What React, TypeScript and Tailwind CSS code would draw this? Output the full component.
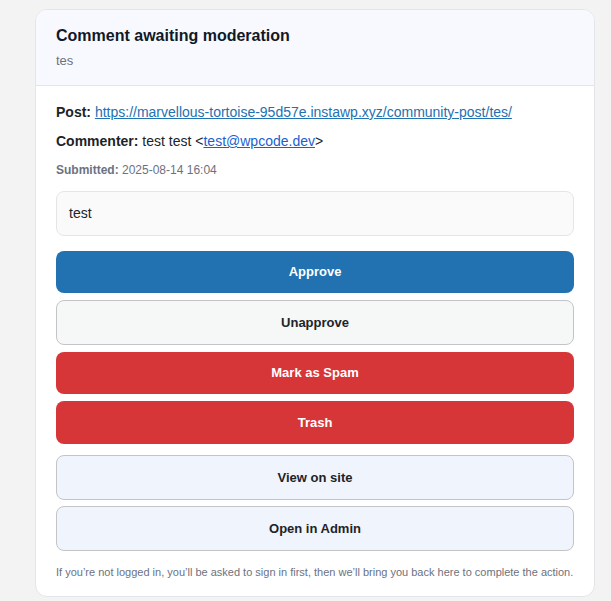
import React from "react";

export default function App() {
  return (
    <div className="min-h-[601px] w-full bg-[#f3f3f3] pt-[9px] pl-[35px] pr-[16px]" style={{ fontFamily: '"Liberation Sans", Arial, sans-serif' }}>
      <div className="w-[560px] overflow-hidden rounded-[12px] border border-[#e3e5e8] bg-white">
        <div className="border-b border-[#e3e5e8] bg-[#f8f9fe] px-[20px] pt-[15px] pb-[15px]">
          <div className="text-[16px] font-bold leading-[22px] text-[#111827]">Comment awaiting moderation</div>
          <div className="mt-[5px] text-[13px] leading-[18px] text-[#6b7280]">tes</div>
        </div>
        <div className="px-[20px] pt-[16px] pb-[17px]">
          <div className="text-[14px] leading-[20px] text-[#1d2327]">
            <span className="font-bold">Post:</span>{" "}
            <a className="text-[#2271b1] underline" href="#">https://marvellous-tortoise-95d57e.instawp.xyz/community-post/tes/</a>
          </div>
          <div className="mt-[9px] text-[14px] leading-[20px] text-[#1d2327]">
            <span className="font-bold">Commenter:</span> test test &lt;<a className="text-[#1a5fd0] underline" href="#">test@wpcode.dev</a>&gt;
          </div>
          <div className="mt-[11px] text-[12px] leading-[16px] text-[#6b7280]">
            <span className="font-bold">Submitted:</span> 2025-08-14 16:04
          </div>
          <div className="mt-[13px] flex h-[45px] items-center rounded-[8px] border border-[#e5e5e5] bg-[#fafafa] px-[12px] text-[14px] text-[#1d2327]">test</div>
          <div className="mt-[15px] flex flex-col">
            <button className="h-[42px] rounded-[8px] bg-[#2271b1] text-[13px] font-bold text-white">Approve</button>
            <button className="mt-[7px] h-[45px] rounded-[8px] border border-[#c3c4c7] bg-[#f6f7f7] text-[13px] font-bold text-[#1d2327]">Unapprove</button>
            <button className="mt-[7px] h-[42px] rounded-[8px] bg-[#d63638] text-[13px] font-bold text-white">Mark as Spam</button>
            <button className="mt-[7px] h-[43px] rounded-[8px] bg-[#d63638] text-[13px] font-bold text-white">Trash</button>
            <button className="mt-[11px] h-[45px] rounded-[8px] border border-[#c3c4c7] bg-[#f0f4fc] text-[13px] font-bold text-[#1d2327]">View on site</button>
            <button className="mt-[6px] h-[45px] rounded-[8px] border border-[#c3c4c7] bg-[#f0f4fc] text-[13px] font-bold text-[#1d2327]">Open in Admin</button>
          </div>
          <div className="mt-[14px] text-[11px] leading-[14px] text-[#6b7280]">
            If you’re not logged in, you’ll be asked to sign in first, then we’ll bring you back here to complete the action.
          </div>
        </div>
      </div>
    </div>
  );
}
